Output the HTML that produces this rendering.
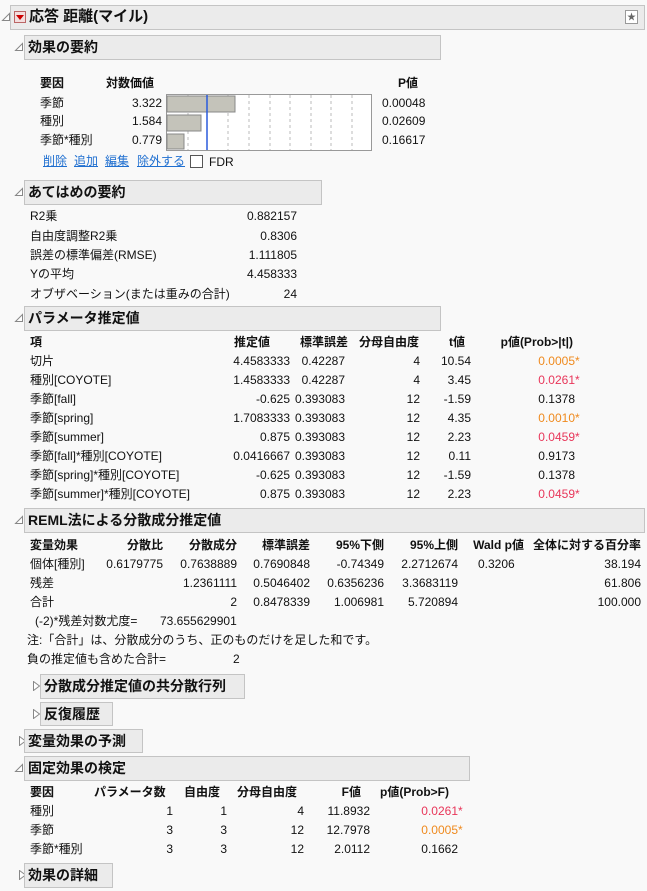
<!DOCTYPE html>
<html><head><meta charset="utf-8"><style>
body{margin:0;width:647px;height:891px;background:#f9f9f9;position:relative;overflow:hidden;font-family:"Liberation Sans","Noto Sans CJK JP",sans-serif;font-size:12px;color:#111}
.a{position:absolute;white-space:nowrap;line-height:14px}
.h{position:absolute;background:#ebebeb;border:1px solid #c4c4c4;box-sizing:border-box;font-weight:bold;font-size:14px;line-height:22px;padding-left:3px;white-space:nowrap}
.b{font-weight:bold}
.o,.c{position:absolute;width:9px;height:10px}
.red{color:#e8365a}.org{color:#ef8a1e}
.lk{color:#1f6fd0;text-decoration:underline}
</style></head><body>
<svg width="0" height="0" style="position:absolute"><defs>
<polygon id="op" points="8.5,1.5 8.5,8.5 1.5,8.5" fill="#fff" stroke="#888"/>
<polygon id="cl" points="1.5,0.5 7.5,5 1.5,9.5" fill="#fff" stroke="#888"/>
</defs></svg>
<svg class="o" style="left:1px;top:12px"><use href="#op"/></svg>
<div class="h" style="left:10px;top:5px;width:635px;height:25px;font-size:15px;padding-left:18px">応答 距離(マイル)</div>
<div style="position:absolute;left:14px;top:11px;width:12px;height:12px;background:#f3dede;border:1px solid #b66;box-sizing:border-box"></div>
<div style="position:absolute;left:16px;top:15px;width:0;height:0;border-left:4px solid transparent;border-right:4px solid transparent;border-top:5px solid #c00"></div>
<div style="position:absolute;left:625px;top:10px;width:13px;height:14px;border:1px solid #999;background:#fff;box-sizing:border-box;font-size:9px;line-height:12px;text-align:center;color:#666">★</div>

<svg class="o" style="left:14px;top:42px"><use href="#op"/></svg>
<div class="h" style="left:24px;top:35px;width:417px;height:25px">効果の要約</div>
<div class="a b" style="left:40px;top:76px">要因</div>
<div class="a b" style="left:106px;top:76px">対数価値</div>
<div class="a b" style="left:398px;top:76px">P値</div>
<div class="a" style="left:40px;top:96px">季節</div><div class="a" style="right:485px;top:96px">3.322</div><div class="a" style="left:382px;top:96px">0.00048</div>
<div class="a" style="left:40px;top:114px">種別</div><div class="a" style="right:485px;top:114px">1.584</div><div class="a" style="left:382px;top:114px">0.02609</div>
<div class="a" style="left:40px;top:133px">季節*種別</div><div class="a" style="right:485px;top:133px">0.779</div><div class="a" style="left:382px;top:133px">0.16617</div>
<svg style="position:absolute;left:166px;top:94px" width="207" height="58">
<rect x="0.5" y="0.5" width="205" height="56" fill="#fff" stroke="#999"/>
<g stroke="#bbb" stroke-dasharray="3,3"><line x1="22" y1="1" x2="22" y2="56"/><line x1="62" y1="1" x2="62" y2="56"/><line x1="83" y1="1" x2="83" y2="56"/><line x1="104" y1="1" x2="104" y2="56"/><line x1="124" y1="1" x2="124" y2="56"/><line x1="145" y1="1" x2="145" y2="56"/><line x1="165" y1="1" x2="165" y2="56"/><line x1="186" y1="1" x2="186" y2="56"/></g>
<rect x="1" y="2" width="68" height="16" fill="#c4c3ba" stroke="#888"/>
<rect x="1" y="21" width="34" height="16" fill="#c4c3ba" stroke="#888"/>
<rect x="1" y="40" width="17" height="15" fill="#c4c3ba" stroke="#888"/>
<line x1="41" y1="1" x2="41" y2="56" stroke="#2a5bdc" stroke-width="1.5"/>
</svg>
<div class="a lk" style="left:43px;top:154px">削除</div>
<div class="a lk" style="left:74px;top:154px">追加</div>
<div class="a lk" style="left:105px;top:154px">編集</div>
<div class="a lk" style="left:137px;top:154px">除外する</div>
<div style="position:absolute;left:190px;top:155px;width:13px;height:13px;border:1px solid #555;background:#fff;box-sizing:border-box"></div>
<div class="a" style="left:209px;top:155px">FDR</div>

<svg class="o" style="left:14px;top:187px"><use href="#op"/></svg>
<div class="h" style="left:24px;top:180px;width:298px;height:25px">あてはめの要約</div>
<div class="a" style="left:30px;top:209px">R2乗</div><div class="a" style="right:350px;top:209px">0.882157</div>
<div class="a" style="left:30px;top:229px">自由度調整R2乗</div><div class="a" style="right:350px;top:229px">0.8306</div>
<div class="a" style="left:30px;top:248px">誤差の標準偏差(RMSE)</div><div class="a" style="right:350px;top:248px">1.111805</div>
<div class="a" style="left:30px;top:267px">Yの平均</div><div class="a" style="right:350px;top:267px">4.458333</div>
<div class="a" style="left:30px;top:287px">オブザベーション(または重みの合計)</div><div class="a" style="right:350px;top:287px">24</div>

<svg class="o" style="left:14px;top:313px"><use href="#op"/></svg>
<div class="h" style="left:24px;top:306px;width:417px;height:25px">パラメータ推定値</div>
<div class="a b" style="left:30px;top:335px">項</div>
<div class="a b" style="right:377px;top:335px">推定値</div>
<div class="a b" style="right:299px;top:335px">標準誤差</div>
<div class="a b" style="right:228px;top:335px">分母自由度</div>
<div class="a b" style="right:182px;top:335px">t値</div>
<div class="a b" style="right:74px;top:335px">p値(Prob&gt;|t|)</div>
<div class="a" style="left:30px;top:354px">切片</div><div class="a" style="right:357px;top:354px">4.4583333</div><div class="a" style="right:302px;top:354px">0.42287</div><div class="a" style="right:227px;top:354px">4</div><div class="a" style="right:176px;top:354px">10.54</div><div class="a org" style="right:72px;top:354px">0.0005<span style="position:absolute">*</span></div>
<div class="a" style="left:30px;top:373px">種別[COYOTE]</div><div class="a" style="right:357px;top:373px">1.4583333</div><div class="a" style="right:302px;top:373px">0.42287</div><div class="a" style="right:227px;top:373px">4</div><div class="a" style="right:176px;top:373px">3.45</div><div class="a red" style="right:72px;top:373px">0.0261<span style="position:absolute">*</span></div>
<div class="a" style="left:30px;top:392px">季節[fall]</div><div class="a" style="right:357px;top:392px">-0.625</div><div class="a" style="right:302px;top:392px">0.393083</div><div class="a" style="right:227px;top:392px">12</div><div class="a" style="right:176px;top:392px">-1.59</div><div class="a" style="right:72px;top:392px">0.1378</div>
<div class="a" style="left:30px;top:411px">季節[spring]</div><div class="a" style="right:357px;top:411px">1.7083333</div><div class="a" style="right:302px;top:411px">0.393083</div><div class="a" style="right:227px;top:411px">12</div><div class="a" style="right:176px;top:411px">4.35</div><div class="a org" style="right:72px;top:411px">0.0010<span style="position:absolute">*</span></div>
<div class="a" style="left:30px;top:430px">季節[summer]</div><div class="a" style="right:357px;top:430px">0.875</div><div class="a" style="right:302px;top:430px">0.393083</div><div class="a" style="right:227px;top:430px">12</div><div class="a" style="right:176px;top:430px">2.23</div><div class="a red" style="right:72px;top:430px">0.0459<span style="position:absolute">*</span></div>
<div class="a" style="left:30px;top:449px">季節[fall]*種別[COYOTE]</div><div class="a" style="right:357px;top:449px">0.0416667</div><div class="a" style="right:302px;top:449px">0.393083</div><div class="a" style="right:227px;top:449px">12</div><div class="a" style="right:176px;top:449px">0.11</div><div class="a" style="right:72px;top:449px">0.9173</div>
<div class="a" style="left:30px;top:468px">季節[spring]*種別[COYOTE]</div><div class="a" style="right:357px;top:468px">-0.625</div><div class="a" style="right:302px;top:468px">0.393083</div><div class="a" style="right:227px;top:468px">12</div><div class="a" style="right:176px;top:468px">-1.59</div><div class="a" style="right:72px;top:468px">0.1378</div>
<div class="a" style="left:30px;top:487px">季節[summer]*種別[COYOTE]</div><div class="a" style="right:357px;top:487px">0.875</div><div class="a" style="right:302px;top:487px">0.393083</div><div class="a" style="right:227px;top:487px">12</div><div class="a" style="right:176px;top:487px">2.23</div><div class="a red" style="right:72px;top:487px">0.0459<span style="position:absolute">*</span></div>

<svg class="o" style="left:14px;top:515px"><use href="#op"/></svg>
<div class="h" style="left:24px;top:508px;width:621px;height:25px">REML法による分散成分推定値</div>
<div class="a b" style="left:30px;top:538px">変量効果</div>
<div class="a b" style="right:484px;top:538px">分散比</div>
<div class="a b" style="right:410px;top:538px">分散成分</div>
<div class="a b" style="right:337px;top:538px">標準誤差</div>
<div class="a b" style="right:263px;top:538px">95%下側</div>
<div class="a b" style="right:189px;top:538px">95%上側</div>
<div class="a b" style="right:123px;top:538px">Wald p値</div>
<div class="a b" style="right:6px;top:538px">全体に対する百分率</div>
<div class="a" style="left:30px;top:557px">個体[種別]</div><div class="a" style="right:484px;top:557px">0.6179775</div><div class="a" style="right:410px;top:557px">0.7638889</div><div class="a" style="right:337px;top:557px">0.7690848</div><div class="a" style="right:263px;top:557px">-0.74349</div><div class="a" style="right:189px;top:557px">2.2712674</div><div class="a" style="left:478px;top:557px">0.3206</div><div class="a" style="right:6px;top:557px">38.194</div>
<div class="a" style="left:30px;top:576px">残差</div><div class="a" style="right:410px;top:576px">1.2361111</div><div class="a" style="right:337px;top:576px">0.5046402</div><div class="a" style="right:263px;top:576px">0.6356236</div><div class="a" style="right:189px;top:576px">3.3683119</div><div class="a" style="right:6px;top:576px">61.806</div>
<div class="a" style="left:30px;top:595px">合計</div><div class="a" style="right:410px;top:595px">2</div><div class="a" style="right:337px;top:595px">0.8478339</div><div class="a" style="right:263px;top:595px">1.006981</div><div class="a" style="right:189px;top:595px">5.720894</div><div class="a" style="right:6px;top:595px">100.000</div>
<div class="a" style="left:35px;top:614px">(-2)*残差対数尤度=</div><div class="a" style="left:160px;top:614px">73.655629901</div>
<div class="a" style="left:27px;top:633px">注:「合計」は、分散成分のうち、正のものだけを足した和です。</div>
<div class="a" style="left:27px;top:652px">負の推定値も含めた合計=</div><div class="a" style="left:233px;top:652px">2</div>

<svg class="c" style="left:32px;top:681px"><use href="#cl"/></svg>
<div class="h" style="left:40px;top:674px;width:205px;height:25px">分散成分推定値の共分散行列</div>
<svg class="c" style="left:32px;top:709px"><use href="#cl"/></svg>
<div class="h" style="left:40px;top:702px;width:73px;height:24px">反復履歴</div>
<svg class="c" style="left:18px;top:736px"><use href="#cl"/></svg>
<div class="h" style="left:24px;top:729px;width:119px;height:24px">変量効果の予測</div>
<svg class="o" style="left:14px;top:763px"><use href="#op"/></svg>
<div class="h" style="left:24px;top:756px;width:446px;height:25px">固定効果の検定</div>
<div class="a b" style="left:30px;top:785px">要因</div>
<div class="a b" style="left:94px;top:785px">パラメータ数</div>
<div class="a b" style="left:184px;top:785px">自由度</div>
<div class="a b" style="left:237px;top:785px">分母自由度</div>
<div class="a b" style="right:286px;top:785px">F値</div>
<div class="a b" style="left:380px;top:785px">p値(Prob&gt;F)</div>
<div class="a" style="left:30px;top:804px">種別</div><div class="a" style="right:474px;top:804px">1</div><div class="a" style="right:420px;top:804px">1</div><div class="a" style="right:343px;top:804px">4</div><div class="a" style="right:277px;top:804px">11.8932</div><div class="a red" style="right:189px;top:804px">0.0261<span style="position:absolute">*</span></div>
<div class="a" style="left:30px;top:823px">季節</div><div class="a" style="right:474px;top:823px">3</div><div class="a" style="right:420px;top:823px">3</div><div class="a" style="right:343px;top:823px">12</div><div class="a" style="right:277px;top:823px">12.7978</div><div class="a org" style="right:189px;top:823px">0.0005<span style="position:absolute">*</span></div>
<div class="a" style="left:30px;top:842px">季節*種別</div><div class="a" style="right:474px;top:842px">3</div><div class="a" style="right:420px;top:842px">3</div><div class="a" style="right:343px;top:842px">12</div><div class="a" style="right:277px;top:842px">2.0112</div><div class="a" style="right:189px;top:842px">0.1662</div>
<svg class="c" style="left:18px;top:870px"><use href="#cl"/></svg>
<div class="h" style="left:24px;top:863px;width:89px;height:25px">効果の詳細</div>
</body></html>
